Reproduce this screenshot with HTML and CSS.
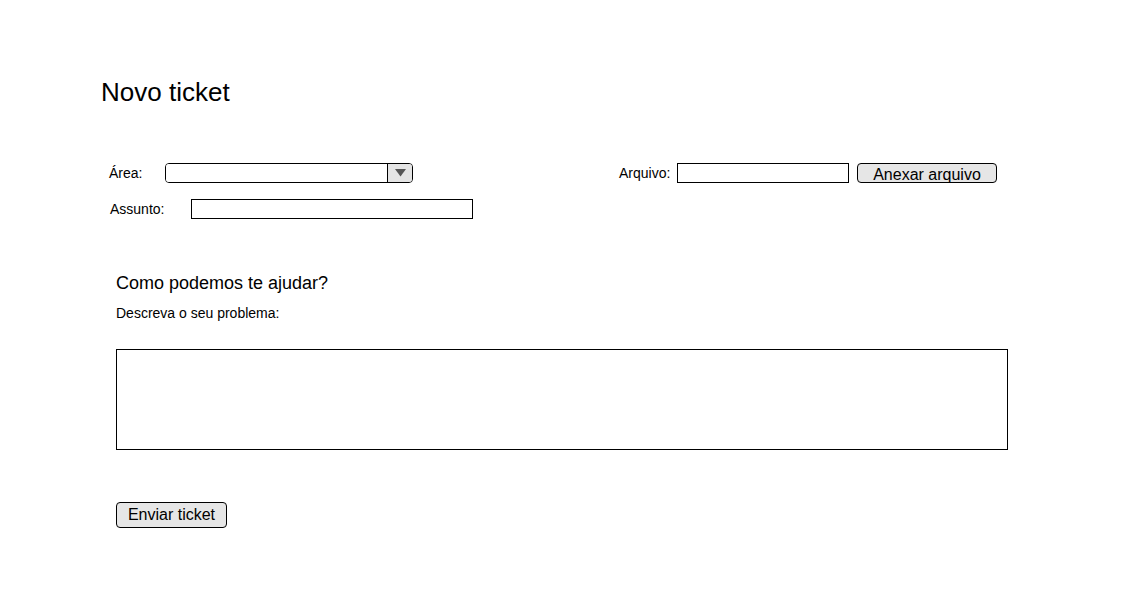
FILE: index.html
```html
<!DOCTYPE html>
<html lang="pt-BR">
<head>
<meta charset="utf-8">
<title>Novo ticket</title>
<link rel="stylesheet" href="styles.css">
</head>
<body>
<main class="page">
  <h1 class="title">Novo ticket</h1>

  <div class="row row-first">
    <label class="label label-area">Área:</label>
    <div class="select">
      <span class="select-value"></span>
      <span class="select-arrow">
        <svg width="11" height="8" viewBox="0 0 11 8"><polygon points="0,0 11,0 5.5,7.5" fill="#555"/></svg>
      </span>
    </div>
    <label class="label label-file">Arquivo:</label>
    <input class="input input-file" type="text">
    <button class="btn btn-attach" type="button">Anexar arquivo</button>
  </div>

  <div class="row row-second">
    <label class="label label-subject">Assunto:</label>
    <input class="input input-subject" type="text">
  </div>

  <section class="help">
    <h2 class="help-title">Como podemos te ajudar?</h2>
    <p class="help-text">Descreva o seu problema:</p>
    <textarea class="textarea"></textarea>
    <button class="btn btn-send" type="button">Enviar ticket</button>
  </section>
</main>
</body>
</html>
```

FILE: styles.css
```css
* { box-sizing: border-box; }

html, body {
  margin: 0;
  padding: 0;
  background: #fff;
  color: #000;
  font-family: "Liberation Sans", Arial, sans-serif;
}

.page {
  padding-top: 77px;
  width: 1121px;
}

.title {
  margin: 0 0 0 101px;
  font-size: 26px;
  line-height: 30px;
  font-weight: normal;
}

.row {
  display: flex;
  align-items: center;
  height: 20px;
}

.row-first {
  margin-top: 56px;
  padding-left: 109px;
}

.row-second {
  margin-top: 16px;
  padding-left: 110px;
}

.label {
  font-size: 14px;
  line-height: 16px;
}

.label-area { width: 56px; }
.label-file { width: 58px; margin-left: 206px; }
.label-subject { width: 81px; }

.select {
  display: flex;
  width: 248px;
  height: 20px;
  border: 1px solid #000;
  border-radius: 4px;
  overflow: hidden;
}

.select-value {
  flex: 1;
  background: #fff;
}

.select-arrow {
  width: 25px;
  border-left: 1px solid #000;
  background: #e4e4e4;
  display: flex;
  align-items: center;
  justify-content: center;
  padding-bottom: 1px;
}

.input {
  height: 20px;
  border: 1px solid #000;
  border-radius: 0;
  padding: 0 2px;
  margin: 0;
  font-family: inherit;
  font-size: 14px;
  background: #fff;
  outline: none;
}

.input-file { width: 172px; }
.input-subject { width: 282px; }

.btn {
  font-family: "Liberation Sans", Arial, sans-serif;
  font-size: 16px;
  color: #000;
  background: #e6e6e6;
  border: 1px solid #000;
  border-radius: 4px;
  padding: 0;
  margin: 0;
  cursor: pointer;
}

.btn-attach {
  width: 140px;
  height: 20px;
  line-height: 18px;
  margin-left: 8px;
  padding-top: 2px;
}

.help {
  padding-left: 116px;
  margin-top: 54px;
}

.help-title {
  margin: 0;
  font-size: 18px;
  line-height: 21px;
  font-weight: normal;
}

.help-text {
  margin: 11px 0 0;
  font-size: 14px;
  line-height: 16px;
}

.textarea {
  display: block;
  margin: 28px 0 0 0;
  width: 892px;
  height: 101px;
  border: 1px solid #000;
  border-radius: 0;
  padding: 2px;
  resize: none;
  font-family: inherit;
  font-size: 14px;
  outline: none;
}

.btn-send {
  display: block;
  margin: 52px 0 0 0;
  width: 111px;
  height: 26px;
  line-height: 24px;
}
```
